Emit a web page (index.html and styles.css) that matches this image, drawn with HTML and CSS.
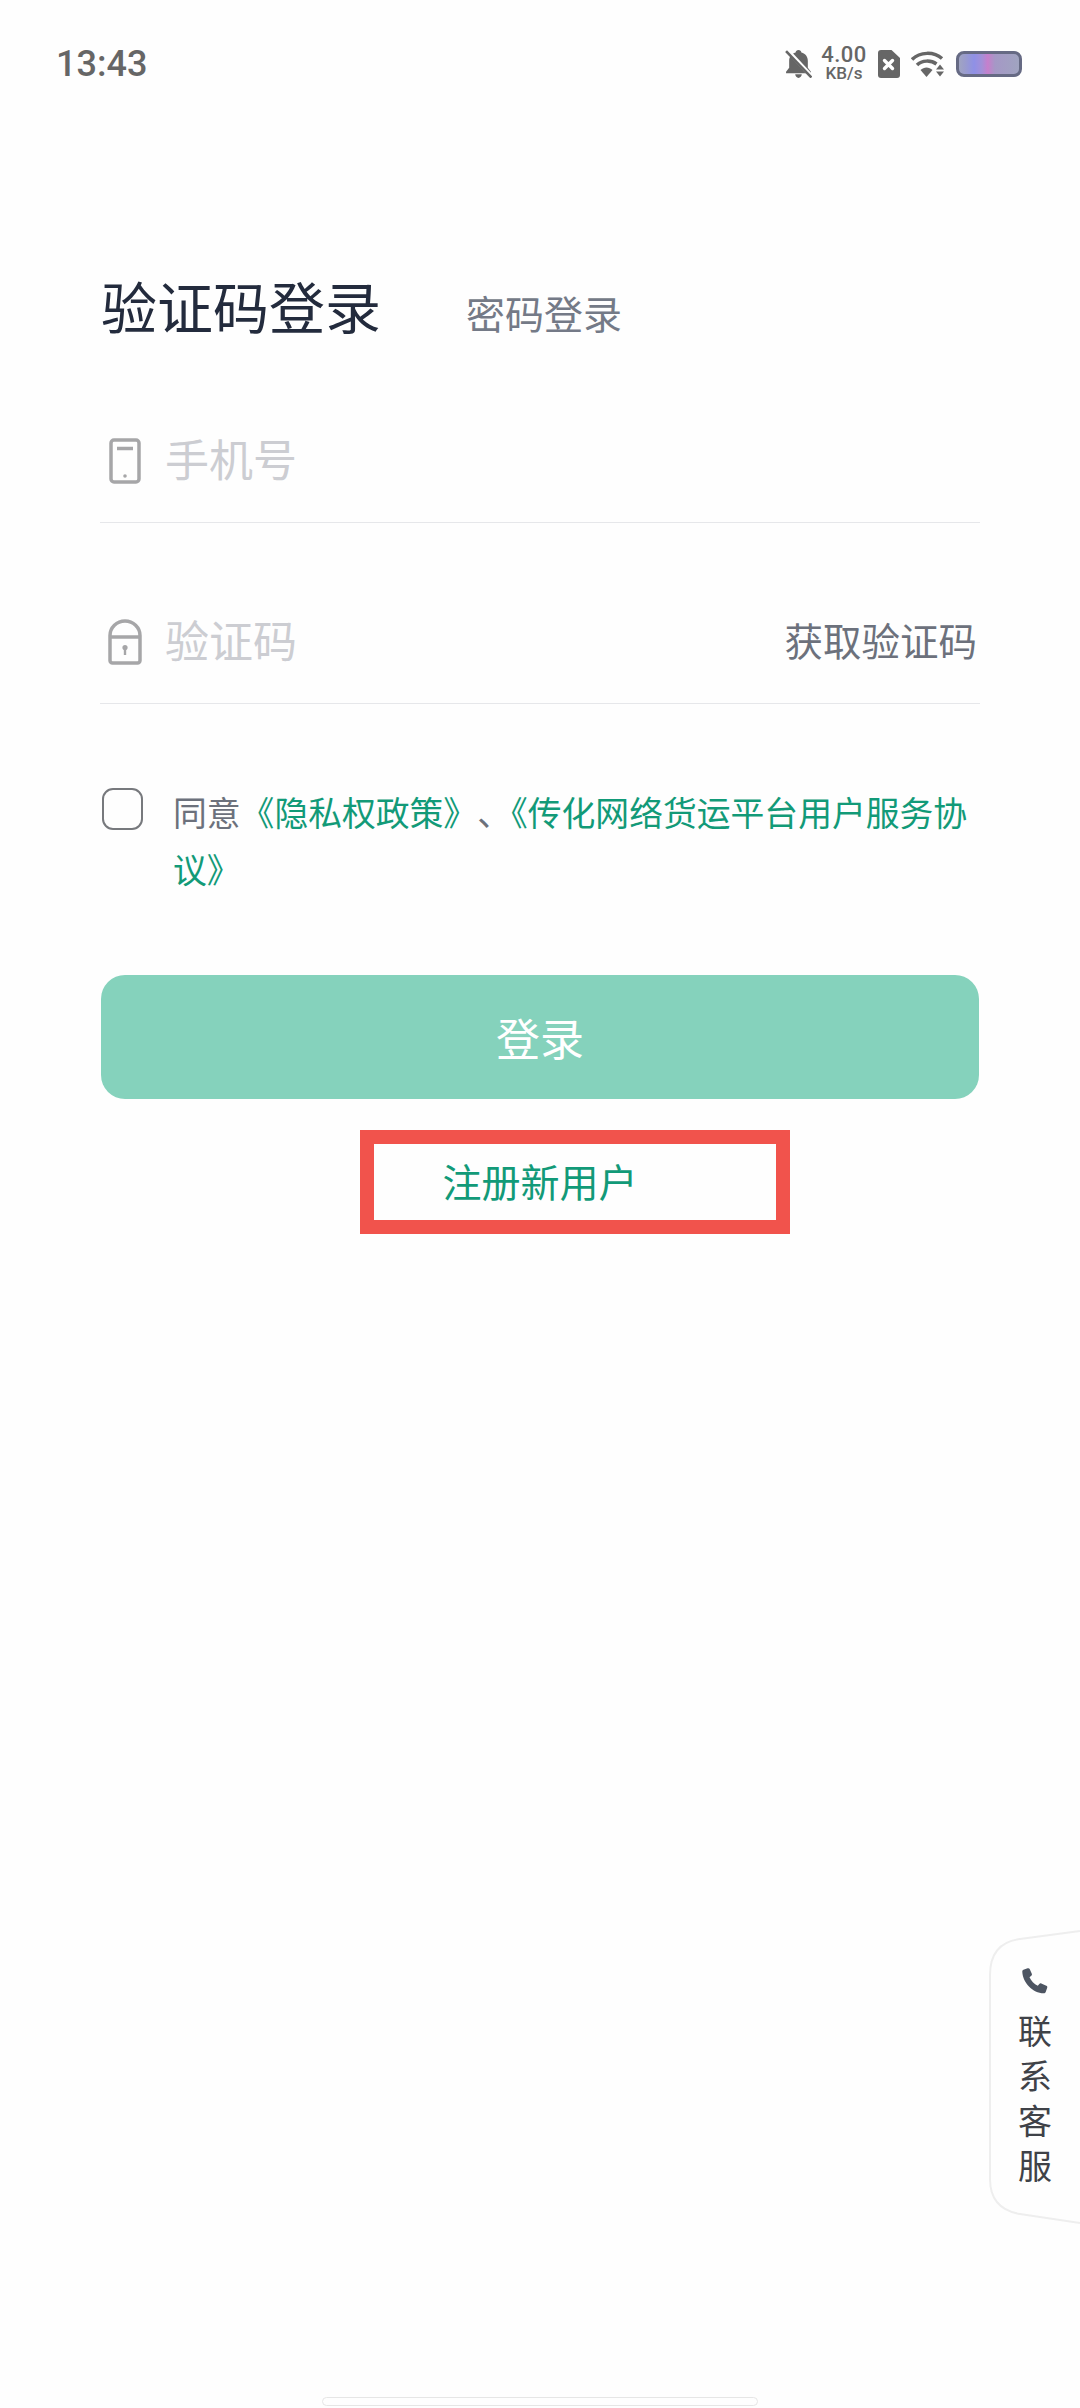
FILE: index.html
```html
<!DOCTYPE html>
<html lang="zh-CN">
<head>
    <meta charset="UTF-8">
    <meta name="viewport" content="width=device-width, initial-scale=1.0">
    <title>验证码登录</title>
    <link rel="stylesheet" href="styles.css">
</head>
<body>

<div class="page">
    <div class="status-bar">
        <span class="time">13:43</span>
        <div class="status-icons">
            <svg class="icon-bell" viewBox="0 0 26 27">
                <path fill="#666" d="M13 0c1.600 0 2.600 1 2.800 2.500 4 1 6.200 4.200 6.200 8v6.500l3 4v1.500H1V21l3-4v-6.500c0-3.800 2.200-7 6.200-8C10.400 1 11.400 0 13 0zM9.800 23.500h6.400c-.3 2-1.500 3.500-3.200 3.500s-2.900-1.500-3.200-3.500z"/>
                <path stroke="#fff" stroke-width="4" d="M1 -1L27 27"/>
                <path stroke="#666" stroke-width="2.500" d="M1 1L25.500 26.500"/>
            </svg>
            <div class="speed">
                <span class="speed-num">4.00</span>
                <span class="speed-unit">KB/s</span>
            </div>
            <svg class="icon-sim" viewBox="0 0 23 28">
                <path fill="#666" d="M4 0h10.500L23 8v17a3 3 0 0 1-3 3H4a3 3 0 0 1-3-3V3a3 3 0 0 1 3-3z"/>
                <path stroke="#fff" stroke-width="3.400" stroke-linecap="round" d="M7.500 10.500l8 8M15.500 10.500l-8 8"/>
            </svg>
            <svg class="icon-wifi" viewBox="0 0 34 27" fill="none">
                <path stroke="#666" stroke-width="3.500" d="M1 9.500C9 1.500 23 1.500 31 8.500"/>
                <path stroke="#666" stroke-width="3.500" d="M6 15C11 10 20 10 25.500 14"/>
                <path fill="#666" d="M9.500 20C13 16.500 18 16.500 21.500 20L15.500 27z"/>
                <path fill="#666" d="M29 14.500l4 5h-8zM25 21.500h8l-4 5z"/>
            </svg>
            <div class="battery"></div>
        </div>
    </div>

    <div class="login">
        <div class="tabs">
            <span class="tab-active">验证码登录</span>
            <span class="tab-other">密码登录</span>
        </div>

        <div class="field field-first">
            <svg class="field-icon" viewBox="0 0 32 46" fill="none">
                <rect x="2" y="2" width="28" height="42" rx="3" stroke="#a6a6a8" stroke-width="3.500"/>
                <path stroke="#a6a6a8" stroke-width="3.500" d="M8 10.500h16"/>
                <circle cx="16" cy="38" r="1.800" fill="#a6a6a8"/>
            </svg>
            <span class="hint">手机号</span>
        </div>

        <div class="field">
            <svg class="field-icon" viewBox="0 0 34 45" fill="none">
                <path stroke="#a6a6a8" stroke-width="3.500" d="M2 17.500V16a15 14.500 0 0 1 30 0V41a2.500 2.500 0 0 1-2.500 2.500h-25A2.500 2.500 0 0 1 2 41zM2 17.500h30"/>
                <circle cx="17" cy="28" r="2.600" fill="#a6a6a8"/>
                <path stroke="#a6a6a8" stroke-width="2.400" d="M17 29v6.500"/>
            </svg>
            <span class="hint">验证码</span>
            <span class="get-code">获取验证码</span>
        </div>

        <div class="agree">
            <span class="checkbox"></span>
            <p class="agree-text"><span>同意</span><span class="link">《隐私权政策》</span><span class="sep">、</span><span class="link">《传化网络货运平台用户服务协</span><span class="link">议》</span></p>
        </div>

        <button class="login-btn">登录</button>

        <div class="register">
            <span class="register-text">注册新用户</span>
            <div class="highlight"></div>
        </div>
    </div>

    <div class="service">
        <svg class="service-bg" viewBox="0 0 92 296" fill="none">
            <path fill="#fefefe" stroke="#eeeeee" stroke-width="2" d="M92 2L32 10Q2 14 2 46V250Q2 280 32 285L92 294"/>
        </svg>
        <svg class="icon-phone" viewBox="0 0 26 26">
            <path fill="#4d5562" d="M1.500 1.800L5.600.3c1-.3 1.800 0 2.200.9l2 4.500c.3.800.2 1.500-.5 2L7.500 9.300c1.600 3.600 4.600 6.700 8.300 8.500l1.500-1.900c.6-.7 1.300-.8 2-.5l5 2.300c.9.400 1.200 1.200.9 2.100l-1.500 4.200c-.3.900-1 1.300-2 1.300C10.700 25 .7 14.600.3 3.700c0-.9.400-1.600 1.200-1.900z"/>
        </svg>
        <span class="service-text">联</span>
        <span class="service-text">系</span>
        <span class="service-text">客</span>
        <span class="service-text">服</span>
    </div>

    <div class="home-bar"></div>
</div>

</body>
</html>
```

FILE: styles.css
```css
body {
    margin: 0;
    background: #fefefe;
    font-family: "Noto Sans CJK SC", "Noto Sans", sans-serif;
}
.page {
    position: relative;
    width: 1080px;
    height: 2408px;
    overflow: hidden;
}

/* status bar */
.status-bar {
    display: flex;
    align-items: center;
    justify-content: space-between;
    height: 127px;
    padding: 0 58px 0 56px;
}
.time {
    font-family: Roboto, sans-serif;
    font-weight: 500;
    font-size: 36px;
    color: #666;
}
.status-icons {
    display: flex;
    align-items: center;
}
.icon-bell {
    width: 27px;
    height: 28px;
    margin-right: 9px;
}
.speed {
    display: flex;
    flex-direction: column;
    align-items: center;
    width: 46px;
    margin-right: 10px;
    font-family: Roboto, sans-serif;
    font-weight: 500;
    color: #666;
}
.speed-num {
    font-size: 22px;
    line-height: 20px;
    letter-spacing: 0.5px;
}
.speed-unit {
    font-size: 17px;
    line-height: 17px;
}
.icon-sim {
    width: 23px;
    height: 28px;
    margin-right: 11px;
}
.icon-wifi {
    width: 34px;
    height: 27px;
    margin-right: 11px;
}
.battery {
    box-sizing: border-box;
    width: 66px;
    height: 26px;
    border: 3px solid #666a84;
    border-radius: 8px;
    background: linear-gradient(90deg, #a0a4c2 0%, #9a9ccc 10%, #8f90e6 25%, #a390d8 38%, #c67fcc 48%, #a598c6 60%, #a0a4c0 100%);
}

/* login form */
.login {
    padding: 0 100px;
}
.tabs {
    display: flex;
    align-items: baseline;
    margin-top: 148px;
    line-height: 60px;
}
.tab-active {
    margin-left: 1px;
    font-size: 56px;
    color: #232b3d;
}
.tab-other {
    margin-left: 85px;
    font-size: 39px;
    color: #747a87;
}
.field {
    display: flex;
    align-items: center;
    height: 120px;
    margin-top: 60px;
    border-bottom: 1px solid #e6e7ea;
}
.field-first {
    margin-top: 60px;
}
.field-icon {
    width: 34px;
    height: 46px;
    margin: 0 23px 2px 8px;
}
.hint {
    margin-bottom: 8px;
    font-size: 44px;
    color: #cccdd2;
}
.get-code {
    margin-left: auto;
    margin-right: 3px;
    margin-bottom: 8px;
    font-size: 38.5px;
    color: #6c717c;
}
.agree {
    display: flex;
    margin-top: 79px;
}
.checkbox {
    box-sizing: border-box;
    flex: none;
    width: 41px;
    height: 42px;
    margin: 5px 30px 0 2px;
    border: 2px solid #77797d;
    border-radius: 11px;
}
.agree-text {
    margin: 0;
    font-size: 33.8px;
    line-height: 57px;
    text-spacing-trim: space-all;
    color: #6c717c;
}
.sep {
    letter-spacing: -17px;
}
.link {
    color: #129a78;
}
.login-btn {
    display: block;
    width: 878px;
    height: 124px;
    margin: 78px 0 0 1px;
    border: 0;
    border-radius: 24px;
    background: #85d2bc;
    color: #fff;
    font-family: inherit;
    font-size: 44px;
}
.register {
    position: relative;
    display: flex;
    align-items: center;
    justify-content: center;
    height: 104px;
    margin-top: 31px;
}
.register-text {
    margin-bottom: 4px;
    font-size: 39px;
    color: #129a78;
}
.highlight {
    position: absolute;
    top: 0;
    left: 260px;
    box-sizing: border-box;
    width: 430px;
    height: 104px;
    border: 14px solid #f1534c;
}

/* floating tab at the right edge */
.service {
    position: absolute;
    top: 1929px;
    right: 0;
    display: flex;
    flex-direction: column;
    align-items: center;
    width: 90px;
    height: 296px;
    box-sizing: border-box;
    padding: 39px 0 0 0;
}
.service-bg {
    position: absolute;
    top: 0;
    left: -2px;
    width: 92px;
    height: 296px;
}
.icon-phone {
    position: relative;
    width: 26px;
    height: 26px;
    margin-bottom: 13px;
}
.service-text {
    position: relative;
    font-size: 34px;
    line-height: 45px;
    color: #3f4248;
}

.home-bar {
    position: absolute;
    left: 322px;
    bottom: 2px;
    box-sizing: border-box;
    width: 436px;
    height: 9px;
    border: 1px solid #e6e6e6;
    border-radius: 5px;
    background: #fefefe;
}
```
